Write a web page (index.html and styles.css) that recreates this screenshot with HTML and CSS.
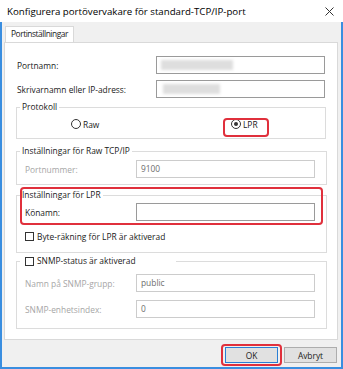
FILE: index.html
```html
<!DOCTYPE html>
<html lang="sv">
<head>
    <meta charset="UTF-8">
    <title>Konfigurera portövervakare för standard-TCP/IP-port</title>
    <link rel="stylesheet" href="styles.css">
</head>
<body>
    <div class="window">
        <div class="titlebar">
            <span class="title">Konfigurera portövervakare för standard-TCP/IP-port</span>
            <svg class="close" width="9" height="9" viewBox="0 0 9 9">
                <path d="M0.5 0.5 L8.5 8.5 M8.5 0.5 L0.5 8.5" stroke="#333" stroke-width="1" fill="none"/>
            </svg>
        </div>

        <div class="client">
            <div class="tabs">
                <div class="tab">Portinställningar</div>
            </div>

            <div class="panel">
                <div class="row top-row">
                    <span class="label">Portnamn:</span>
                    <div class="input wide"><span class="blur blur-1"></span></div>
                </div>
                <div class="row top-row">
                    <span class="label">Skrivarnamn eller IP-adress:</span>
                    <div class="input wide"><span class="blur blur-2"></span></div>
                </div>

                <fieldset class="group group-proto">
                    <legend>Protokoll</legend>
                    <div class="radios">
                        <div class="radio radio-raw"><span class="dot"></span>Raw</div>
                        <div class="radio radio-lpr checked"><span class="dot"></span>LPR<span class="mark mark-lpr"></span></div>
                    </div>
                </fieldset>

                <fieldset class="group group-raw">
                    <legend>Inställningar för Raw TCP/IP</legend>
                    <div class="row disabled">
                        <span class="label">Portnummer:</span>
                        <div class="input">9100</div>
                    </div>
                </fieldset>

                <fieldset class="group group-lpr">
                    <legend>Inställningar för LPR</legend>
                    <div class="row">
                        <span class="label">Könamn:</span>
                        <div class="input enabled"></div>
                    </div>
                    <div class="check check-byte"><span class="box"></span>Byte-räkning för LPR är aktiverad</div>
                    <span class="mark mark-group"></span>
                </fieldset>

                <fieldset class="group group-snmp">
                    <legend><span class="check"><span class="box"></span>SNMP-status är aktiverad</span></legend>
                    <div class="row disabled">
                        <span class="label">Namn på SNMP-grupp:</span>
                        <div class="input">public</div>
                    </div>
                    <div class="row disabled second">
                        <span class="label">SNMP-enhetsindex:</span>
                        <div class="input">0</div>
                    </div>
                </fieldset>
            </div>

            <div class="buttons">
                <button class="btn default">OK<span class="mark mark-ok"></span></button>
                <button class="btn">Avbryt</button>
            </div>
        </div>
    </div>
</body>
</html>
```

FILE: styles.css
```css
* {
    margin: 0;
    padding: 0;
    box-sizing: border-box;
}

body {
    font-family: "Open Sans", "Noto Sans", Arial, sans-serif;
    font-size: 8.4px;
    color: #1a1a1a;
    background: #fff;
}

.window {
    width: 343px;
    height: 369px;
    display: flex;
    flex-direction: column;
}

.titlebar {
    height: 22px;
    display: flex;
    align-items: center;
    justify-content: space-between;
    padding: 0 9px 0 7px;
    background: #fff;
}

.title {
    font-size: 9.7px;
    color: #000;
}

.client {
    flex: 1;
    background: #f0f0f0;
    border: 2px solid #3a8ee0;
    border-top: none;
    padding: 4px 3px 2px 2px;
    display: flex;
    flex-direction: column;
}

.tabs {
    display: flex;
    height: 16px;
    padding-left: 1px;
}

.tab {
    height: 16px;
    margin-top: -1px;
    padding: 0 5px;
    border: 1px solid #d9d9d9;
    border-bottom: none;
    background: #fff;
    line-height: 14px;
    letter-spacing: -0.45px;
    position: relative;
    top: 1px;
}

.panel {
    height: 298px;
    background: #fff;
    border: 1px solid #d9d9d9;
    padding: 13px 12px 0 12px;
}

.row {
    display: flex;
    align-items: center;
    height: 18px;
}

.top-row + .top-row {
    margin-top: 6px;
}

.top-row .label {
    width: 139px;
}

.input {
    height: 18px;
    border: 1px solid #cccccc;
    background: #fff;
    padding-left: 4px;
    line-height: 16px;
    color: #6d6d6d;
}

.input.wide {
    width: 169px;
    border-color: #9a9a9a;
    position: relative;
}

.input.enabled {
    border-color: #9a9a9a;
}

.blur {
    position: absolute;
    top: 3px;
    height: 10px;
    background: #dedede;
    filter: blur(1.5px);
}

.blur-1 {
    left: 4px;
    width: 72px;
}

.blur-2 {
    left: 6px;
    width: 57px;
}

.group {
    border: 1px solid #dcdcdc;
    margin: 0 -1px 0 -1px;
    padding: 0 11px 0 8px;
    position: relative;
}

/* legends sit inside the fieldset padding, pull them back to the frame */
.group legend {
    margin-left: -5px;
    padding: 0 2px;
    height: 14px;
    line-height: 14px;
}

.group .label {
    width: 111px;
}

.group .input {
    width: 179px;
}

.group-proto {
    margin-top: 2px;
    padding-bottom: 6px;
}

.radios {
    display: flex;
    margin-top: 2px;
    height: 16px;
    align-items: center;
}

.radio {
    display: flex;
    align-items: center;
    position: relative;
}

.radio-raw {
    margin-left: 46px;
    width: 160px;
}

.dot {
    width: 10px;
    height: 10px;
    border: 1px solid #333;
    border-radius: 50%;
    margin-right: 2px;
    display: flex;
    align-items: center;
    justify-content: center;
    background: #fff;
}

.checked .dot::after {
    content: "";
    width: 4px;
    height: 4px;
    border-radius: 50%;
    background: #333;
}

.mark {
    position: absolute;
    border: 2px solid #e0303c;
    border-radius: 4px;
}

.mark-lpr {
    left: -8px;
    top: -1px;
    width: 46px;
    height: 19px;
}

.group-raw {
    margin-top: 5px;
    padding-bottom: 6px;
}

.group-raw .row {
    margin-top: 2px;
}

.disabled .label {
    color: #a6a6a6;
}

.disabled .input {
    color: #6d6d6d;
}

.group-lpr {
    margin-top: 3px;
    padding-bottom: 8px;
}

.group-lpr .row {
    margin-top: 1px;
}

.mark-group {
    left: 3px;
    top: -15px;
    width: 303px;
    height: 38px;
}

.check {
    display: flex;
    align-items: center;
    color: #1a1a1a;
}

.box {
    width: 9px;
    height: 9px;
    border: 1px solid #333;
    background: #fff;
    margin-right: 3px;
}

.check-byte {
    margin-top: 8px;
    height: 15px;
}

.group-snmp {
    margin-top: 1px;
    padding-bottom: 10px;
}

.group-snmp legend {
    width: 156px;
    padding-left: 5px;
}

.group-snmp .row {
    margin-top: 6px;
}

.group-snmp .row.second {
    margin-top: 8px;
}

.buttons {
    display: flex;
    justify-content: flex-end;
    gap: 6px;
    margin-top: 7px;
    padding-right: 1px;
}

.btn {
    width: 53px;
    height: 16px;
    font-family: inherit;
    font-size: 8.4px;
    color: #1a1a1a;
    background: #e1e1e1;
    border: 1px solid #adadad;
    position: relative;
}

.btn.default {
    border-color: #2a7fd4;
}

.mark-ok {
    left: -5px;
    top: -4px;
    width: 61px;
    height: 22px;
}
```
